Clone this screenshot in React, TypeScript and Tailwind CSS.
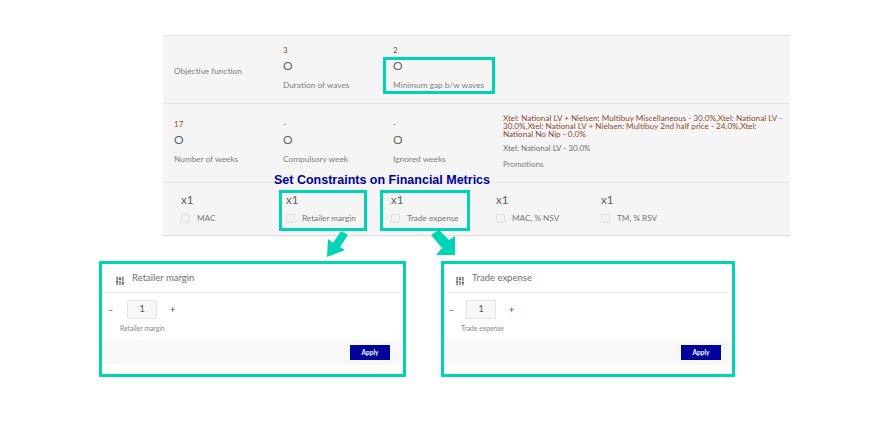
import { SlidersVertical } from 'lucide-react';

const font = { fontFamily: 'Lato, "Open Sans", sans-serif' };

function Metric({ top, value, label, className = '' }: { top: string; value: string; label: string; className?: string }) {
  return (
    <div className={`flex flex-col ${className}`}>
      <span className="text-[8px] leading-[10px] text-[#8a4a32]">{top}</span>
      <span className="mt-[4px] text-[12px] leading-[14px] text-[#666666]">{value}</span>
      <span className="mt-[6px] text-[8.3px] leading-[12px] text-[#808080]">{label}</span>
    </div>
  );
}

function Check({ label }: { label: string }) {
  return (
    <div className="flex w-[105px] flex-col">
      <span className="text-[11.5px] leading-[14px] text-[#606060]">x1</span>
      <div className="mt-[6px] flex items-center gap-[7px]">
        <span className="h-[9px] w-[9px] rounded-[1px] border border-[#e0e0e0] bg-[#f3f3f3]" />
        <span className="text-[8.2px] leading-[10px] text-[#757575]">{label}</span>
      </div>
    </div>
  );
}

function Popup({ title, width, headPad, stepperPad, minusWidth, applyPad }: { title: string; width: string; headPad: string; stepperPad: string; minusWidth: string; applyPad: string }) {
  return (
    <div className={`flex h-[116px] flex-col border-[3px] border-[#00d4b4] bg-white px-[1px] ${width}`}>
      <div className={`flex h-[29px] items-center gap-[7px] border-b border-[#eeeeee] ${headPad}`}>
        <SlidersVertical size={10} strokeWidth={2.5} className="mt-[5px] text-[#444444]" />
        <span className="text-[9.5px] leading-[12px] text-[#707070]">{title}</span>
      </div>
      <div className={`flex h-[47px] flex-col pt-[7px] ${stepperPad}`}>
        <div className="flex items-center">
          <span className={`text-[9px] leading-[10px] text-[#555555] ${minusWidth}`}>–</span>
          <div className="flex h-[19px] w-[30px] items-start justify-center rounded-[1px] border border-[#e3e3e3] bg-[#f8f8f8] text-[9px] leading-[15px] text-[#555555]">
            1
          </div>
          <span className="ml-[13px] text-[9px] leading-[10px] text-[#444444]">+</span>
        </div>
        <span className="mt-[4px] ml-[12px] text-[6.8px] leading-[10px] text-[#888888]">{title}</span>
      </div>
      <div className={`flex h-[25px] items-center justify-end bg-[#f8f8f8] ${applyPad}`}>
        <button className="h-[15px] w-[40px] bg-[#00009c] text-[6.5px] leading-[14px] font-bold text-white">Apply</button>
      </div>
    </div>
  );
}

export default function App() {
  return (
    <div className="relative h-[445px] w-[890px] overflow-hidden bg-white pt-[35px]" style={font}>
      {/* Summary table */}
      <div className="ml-[163px] w-[627px] bg-[#f5f5f5] pb-[1px]">
        <div className="flex h-[69px] items-start border-t border-b border-[#e6e6e6] pt-[9px] pl-[11px]">
          <span className="mt-[20px] w-[109px] text-[8.3px] leading-[13px] text-[#808080]">Objective function</span>
          <Metric top="3" value="O" label="Duration of waves" className="w-[110px]" />
          <Metric top="2" value="O" label="Minimum gap b/w waves" />
        </div>
        <div className="flex h-[79px] items-start border-b border-[#e6e6e6] pt-[10px] pl-[11px]">
          <Metric top="17" value="O" label="Number of weeks" className="mt-[5px] w-[109px]" />
          <Metric top="-" value="O" label="Compulsory week" className="mt-[5px] w-[110px]" />
          <Metric top="-" value="O" label="Ignored weeks" className="mt-[5px] w-[110px]" />
          <div className="flex w-[282px] flex-col">
            <p className="text-[8.15px] leading-[8px] text-[#8a4a32]">
              Xtel: National LV + Nielsen: Multibuy Miscellaneous - 30.0%,Xtel: National LV - 30.0%,Xtel: National LV + Nielsen: Multibuy 2nd half price - 24.0%,Xtel: National No Nip - 0.0%
            </p>
            <span className="mt-[5px] text-[8px] leading-[10px] text-[#6a6a6a]">Xtel: National LV - 30.0%</span>
            <span className="mt-[6px] text-[8px] leading-[10px] text-[#808080]">Promotions</span>
          </div>
        </div>
        <div className="flex h-[53px] items-center border-b border-[#e0e0e6] pb-[2px] pl-[18px]">
          <Check label="MAC" />
          <Check label="Retailer margin" />
          <Check label="Trade expense" />
          <Check label="MAC, % NSV" />
          <Check label="TM, % RSV" />
        </div>
      </div>

      {/* Detail popups */}
      <div className="mt-[24px] ml-[99px] flex gap-[35px]">
        <Popup title="Retailer margin" width="w-[307px]" headPad="pl-[12px]" stepperPad="px-[5px]" minusWidth="w-[19px]" applyPad="pr-[12px]" />
        <Popup title="Trade expense" width="w-[294px]" headPad="pl-[10px]" stepperPad="px-[4px]" minusWidth="w-[17px]" applyPad="pr-[10px]" />
      </div>

      {/* Annotations */}
      <span className="absolute top-[172px] left-[274px] text-[12.5px] leading-[16px] font-bold whitespace-nowrap text-[#00009c]" style={{ fontFamily: '"Liberation Sans", sans-serif' }}>
        Set Constraints on Financial Metrics
      </span>
      <div className="absolute top-[57px] left-[383px] h-[37px] w-[112px] border-[3px] border-[#00d4b4]" />
      <div className="absolute top-[190px] left-[279px] h-[41px] w-[88px] border-[3px] border-[#00d4b4]" />
      <div className="absolute top-[190px] left-[380px] h-[41px] w-[90px] border-[3px] border-[#00d4b4]" />
      <svg className="absolute top-[230px] left-[320px]" width="140" height="30" viewBox="0 0 140 30">
        <path d="M21 1 L28 5 L20 17 L25 20 L7 27 L8 9 L13 13 Z" fill="#00d4b4" />
        <path d="M111 5 L119 0 L129 10 L135 6 L135 25 L116 25 L122 18 Z" fill="#00d4b4" />
      </svg>
    </div>
  );
}
